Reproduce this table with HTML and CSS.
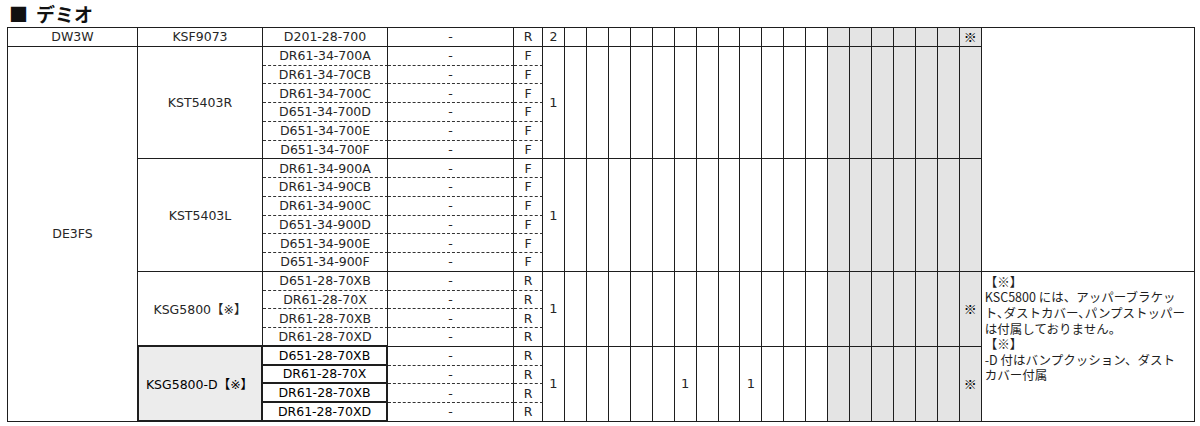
FILE: index.html
```html
<!DOCTYPE html>
<html lang="ja">
<head>
<meta charset="utf-8">
<title>デミオ</title>
<link rel="stylesheet" href="styles.css">
</head>
<body>
<div class="page">
  <h2 class="title"><span class="sq">■</span>デミオ</h2>
  <div class="grid">
    <!-- row 1 -->
    <div class="c">DW3W</div>
    <div class="c">KSF9073</div>
    <div class="c">D201-28-700</div>
    <div class="c">-</div>
    <div class="c">R</div>
    <div class="c">2</div>
    <div class="c"></div><div class="c"></div><div class="c"></div><div class="c"></div>
    <div class="c"></div><div class="c"></div><div class="c"></div><div class="c"></div>
    <div class="c"></div><div class="c"></div><div class="c"></div><div class="c"></div>
    <div class="c g"></div><div class="c g"></div><div class="c g"></div>
    <div class="c g"></div><div class="c g"></div><div class="c g"></div>
    <div class="c g mark">※</div>
    <div class="c rem r13"></div>

    <!-- group KST5403R -->
    <div class="c r20">DE3FS</div>
    <div class="c r6">KST5403R</div>
    <div class="c d">DR61-34-700A</div>
    <div class="c d">-</div>
    <div class="c d">F</div>
    <div class="c r6 qty">1</div>
    <div class="c r6"></div><div class="c r6"></div><div class="c r6"></div><div class="c r6"></div>
    <div class="c r6"></div><div class="c r6"></div><div class="c r6"></div><div class="c r6"></div>
    <div class="c r6"></div><div class="c r6"></div><div class="c r6"></div><div class="c r6"></div>
    <div class="c r6 g"></div><div class="c r6 g"></div><div class="c r6 g"></div>
    <div class="c r6 g"></div><div class="c r6 g"></div><div class="c r6 g"></div>
    <div class="c r6 g"></div>
    <div class="c d">DR61-34-70CB</div><div class="c d">-</div><div class="c d">F</div>
    <div class="c d">DR61-34-700C</div><div class="c d">-</div><div class="c d">F</div>
    <div class="c d">D651-34-700D</div><div class="c d">-</div><div class="c d">F</div>
    <div class="c d">D651-34-700E</div><div class="c d">-</div><div class="c d">F</div>
    <div class="c">D651-34-700F</div><div class="c">-</div><div class="c">F</div>

    <!-- group KST5403L -->
    <div class="c r6">KST5403L</div>
    <div class="c d">DR61-34-900A</div>
    <div class="c d">-</div>
    <div class="c d">F</div>
    <div class="c r6 qty">1</div>
    <div class="c r6"></div><div class="c r6"></div><div class="c r6"></div><div class="c r6"></div>
    <div class="c r6"></div><div class="c r6"></div><div class="c r6"></div><div class="c r6"></div>
    <div class="c r6"></div><div class="c r6"></div><div class="c r6"></div><div class="c r6"></div>
    <div class="c r6 g"></div><div class="c r6 g"></div><div class="c r6 g"></div>
    <div class="c r6 g"></div><div class="c r6 g"></div><div class="c r6 g"></div>
    <div class="c r6 g"></div>
    <div class="c d">DR61-34-90CB</div><div class="c d">-</div><div class="c d">F</div>
    <div class="c d">DR61-34-900C</div><div class="c d">-</div><div class="c d">F</div>
    <div class="c d">D651-34-900D</div><div class="c d">-</div><div class="c d">F</div>
    <div class="c d">D651-34-900E</div><div class="c d">-</div><div class="c d">F</div>
    <div class="c">D651-34-900F</div><div class="c">-</div><div class="c">F</div>

    <!-- group KSG5800 -->
    <div class="c r4 thick-b">KSG5800【※】</div>
    <div class="c d">D651-28-70XB</div>
    <div class="c d">-</div>
    <div class="c d">R</div>
    <div class="c r4 qty">1</div>
    <div class="c r4"></div><div class="c r4"></div><div class="c r4"></div><div class="c r4"></div>
    <div class="c r4"></div><div class="c r4"></div><div class="c r4"></div><div class="c r4"></div>
    <div class="c r4"></div><div class="c r4"></div><div class="c r4"></div><div class="c r4"></div>
    <div class="c r4 g"></div><div class="c r4 g"></div><div class="c r4 g"></div>
    <div class="c r4 g"></div><div class="c r4 g"></div><div class="c r4 g"></div>
    <div class="c r4 g mark">※</div>
    <div class="c rem r8">
      <div class="ln">【※】</div>
      <div class="ln">KSC5800 には、アッパーブラケッ</div>
      <div class="ln">ト､ダストカバー､パンプストッパー</div>
      <div class="ln">は付属しておりません。</div>
      <div class="ln">【※】</div>
      <div class="ln">-D 付はバンプクッション、ダスト</div>
      <div class="ln">カバー付属</div>
    </div>
    <div class="c d">DR61-28-70X</div><div class="c d">-</div><div class="c d">R</div>
    <div class="c d">DR61-28-70XB</div><div class="c d">-</div><div class="c d">R</div>
    <div class="c thick-b">DR61-28-70XD</div><div class="c">-</div><div class="c">R</div>

    <!-- group KSG5800-D -->
    <div class="c r4 hl">KSG5800-D【※】</div>
    <div class="c bx">D651-28-70XB</div>
    <div class="c d">-</div>
    <div class="c d">R</div>
    <div class="c r4 qty">1</div>
    <div class="c r4"></div><div class="c r4"></div><div class="c r4"></div><div class="c r4"></div>
    <div class="c r4"></div><div class="c r4 qty">1</div><div class="c r4"></div><div class="c r4"></div>
    <div class="c r4 qty">1</div><div class="c r4"></div><div class="c r4"></div><div class="c r4"></div>
    <div class="c r4 g"></div><div class="c r4 g"></div><div class="c r4 g"></div>
    <div class="c r4 g"></div><div class="c r4 g"></div><div class="c r4 g"></div>
    <div class="c r4 g mark">※</div>
    <div class="c bx">DR61-28-70X</div><div class="c d">-</div><div class="c d">R</div>
    <div class="c bx">DR61-28-70XB</div><div class="c d">-</div><div class="c d">R</div>
    <div class="c bx">DR61-28-70XD</div><div class="c">-</div><div class="c">R</div>
  </div>
</div>
</body>
</html>
```

FILE: styles.css
```css
* { box-sizing: border-box; }

body {
  margin: 0;
  background: #ffffff;
  color: #262626;
  font-family: "DejaVu Sans", "Noto Sans CJK JP", sans-serif;
}

.page {
  padding: 0 0 0 7px;
}

.title {
  margin: 0;
  height: 27px;
  padding-left: 2px;
  font-family: "Noto Sans CJK JP", sans-serif;
  font-size: 19px;
  line-height: 27px;
  font-weight: 700;
  color: #111;
}

.title .sq {
  margin-right: 8px;
}

.grid {
  display: grid;
  grid-template-columns: 130px 125px 125px 126px 29px repeat(20, 21.95px) 213px;
  grid-template-rows: repeat(21, 18.76px);
  width: max-content;
  border-top: 1px solid #1e1e1e;
  border-left: 1px solid #1e1e1e;
  font-size: 12.5px;
}

.c {
  display: flex;
  align-items: center;
  justify-content: center;
  border-right: 1px solid #1e1e1e;
  border-bottom: 1px solid #1e1e1e;
  white-space: nowrap;
  overflow: hidden;
}

.d { border-bottom: 1px dashed #333; }

.g { background: #e4e4e4; }

.mark {
  font-family: "Noto Sans CJK JP", sans-serif;
  font-size: 13px;
  color: #000;
}

.qty { font-size: 13px; }

.r4 { grid-row: span 4; }
.r6 { grid-row: span 6; }
.r8 { grid-row: span 8; }
.r13 { grid-row: span 13; }
.r20 { grid-row: span 20; }

.thick-b { border-bottom-width: 2px; }

.hl {
  background: #ececec;
  color: #000;
  border-right-width: 2px;
  border-bottom-width: 2px;
  box-shadow: inset 1px 0 0 #1e1e1e;
}

.bx {
  color: #000;
  border-right-width: 2px;
  border-bottom: 2px solid #1e1e1e;
}

.rem {
  display: block;
  padding: 2px 0 0 3px;
  font-family: "Noto Sans CJK JP", sans-serif;
  font-size: 12.5px;
  text-align: left;
  color: #1e1e1e;
}

.ln {
  height: 15.6px;
  line-height: 15.6px;
}
```
